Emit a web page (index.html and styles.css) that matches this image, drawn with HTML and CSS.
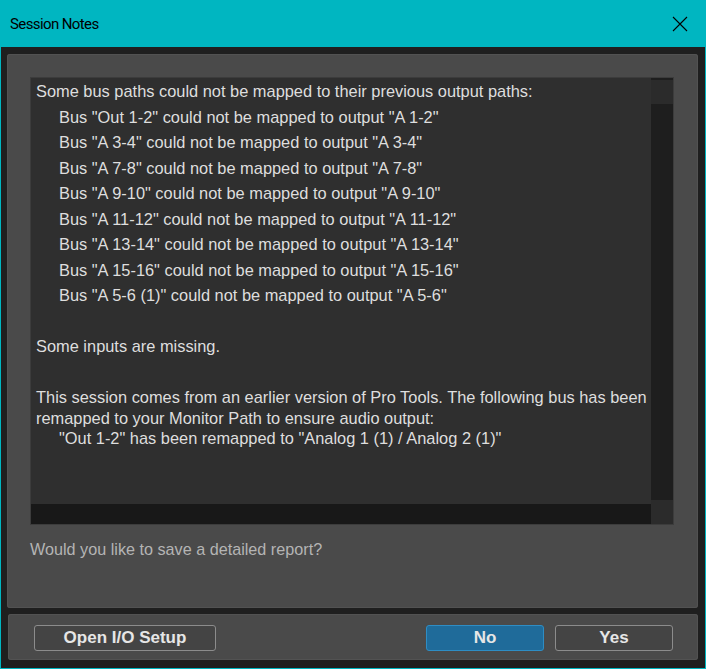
FILE: index.html
```html
<!DOCTYPE html>
<html>
<head>
<meta charset="utf-8">
<link rel="stylesheet" href="styles.css">
</head>
<body>
<div class="window">
  <div class="titlebar">
    <span class="title">Session Notes</span>
    <svg class="close" width="16" height="16" viewBox="0 0 16 16"><path d="M1 1 L15 15 M15 1 L1 15" stroke="#000" stroke-width="1.1" fill="none"/></svg>
  </div>
  <div class="content">
    <div class="panel main">
      <div class="textarea">
        <div class="text-col">
          <div class="text">
            <div class="line">Some bus paths could not be mapped to their previous output paths:</div>
            <div class="line ind">Bus "Out 1-2" could not be mapped to output "A 1-2"</div>
            <div class="line ind">Bus "A 3-4" could not be mapped to output "A 3-4"</div>
            <div class="line ind">Bus "A 7-8" could not be mapped to output "A 7-8"</div>
            <div class="line ind">Bus "A 9-10" could not be mapped to output "A 9-10"</div>
            <div class="line ind">Bus "A 11-12" could not be mapped to output "A 11-12"</div>
            <div class="line ind">Bus "A 13-14" could not be mapped to output "A 13-14"</div>
            <div class="line ind">Bus "A 15-16" could not be mapped to output "A 15-16"</div>
            <div class="line ind">Bus "A 5-6 (1)" could not be mapped to output "A 5-6"</div>
            <div class="line">&nbsp;</div>
            <div class="line">Some inputs are missing.</div>
            <div class="line">&nbsp;</div>
            <div class="para first">This session comes from an earlier version of Pro Tools. The following bus has been remapped to your Monitor Path to ensure audio output:</div>
            <div class="para ind">"Out 1-2" has been remapped to "Analog 1 (1) / Analog 2 (1)"</div>
          </div>
          <div class="hscroll"></div>
        </div>
        <div class="vscroll">
          <div class="vbtn top"></div>
          <div class="vtrack"></div>
          <div class="vbtn corner"></div>
        </div>
      </div>
      <div class="question">Would you like to save a detailed report?</div>
    </div>
    <div class="panel buttons">
      <button class="btn wide">Open I/O Setup</button>
      <div class="spacer"></div>
      <button class="btn primary">No</button>
      <button class="btn">Yes</button>
    </div>
  </div>
</div>
</body>
</html>
```

FILE: styles.css
```css
html, body {
  margin: 0;
  padding: 0;
}
body {
  width: 706px;
  height: 669px;
  background: #00b6c1;
  overflow: hidden;
}
.window {
  width: 706px;
  height: 669px;
  display: flex;
  flex-direction: column;
  box-sizing: border-box;
  padding: 0 1px 1px 1px;
}
.titlebar {
  height: 47px;
  box-sizing: border-box;
  flex: none;
  display: flex;
  align-items: center;
  justify-content: space-between;
  padding: 1px 17px 0 9px;
}
.title {
  font-family: Roboto, "Noto Sans", sans-serif;
  font-size: 15px;
  color: #000;
  letter-spacing: -0.6px;
}
.close {
  display: block;
}
.content {
  flex: 1;
  background: #1f1f1f;
  display: flex;
  flex-direction: column;
  padding: 7px 7px 7px 6px;
  gap: 6px;
}
.panel {
  background: #4a4a4a;
  border-radius: 3px;
  box-shadow: inset 0 0 0 1px #525252;
}
.main {
  height: 554px;
  box-sizing: border-box;
  padding: 24px 25px 0 24px;
}
.textarea {
  height: 446px;
  display: flex;
  background: #2f2f2f;
  box-shadow: 0 0 0 1px #3c3c3c;
}
.text-col {
  flex: 1;
  display: flex;
  flex-direction: column;
  overflow: hidden;
}
.text {
  flex: 1;
  padding: 1px 0 0 5px;
  font-family: "Liberation Sans", Arial, sans-serif;
  font-size: 16.4px;
  color: #dedede;
}
.line {
  line-height: 25.5px;
  white-space: nowrap;
}
.ind {
  padding-left: 23px;
}
.para {
  line-height: 20.5px;
}
.para.first {
  margin-top: 2px;
}
.hscroll {
  height: 20px;
  background: #181818;
  flex: none;
}
.vscroll {
  width: 22px;
  display: flex;
  flex-direction: column;
  background: #1e1e1e;
}
.vbtn {
  height: 24px;
  background: #2b2b2b;
}
.vbtn.top {
  margin-top: 2px;
}
.vtrack {
  flex: 1;
}
.question {
  margin-top: 16px;
  margin-left: -1px;
  font-family: "Liberation Sans", Arial, sans-serif;
  font-size: 16.2px;
  color: #b4b4b4;
}
.buttons {
  height: 46px;
  box-sizing: border-box;
  display: flex;
  align-items: center;
  padding: 1px 25px 0 26px;
  gap: 11px;
  margin-left: 1px;
}
.spacer {
  flex: 1;
}
.btn {
  height: 26px;
  width: 118px;
  box-sizing: border-box;
  border: 1px solid #8c8c8c;
  border-radius: 3px;
  background: #444444;
  color: #e6e6e6;
  font-family: "Liberation Sans", Arial, sans-serif;
  font-weight: bold;
  font-size: 17px;
  padding: 1px 0 0 0;
}
.btn.wide {
  width: 182px;
}
.btn.primary {
  background: #1f6b9a;
  border-color: #2e8dc4;
}
```
